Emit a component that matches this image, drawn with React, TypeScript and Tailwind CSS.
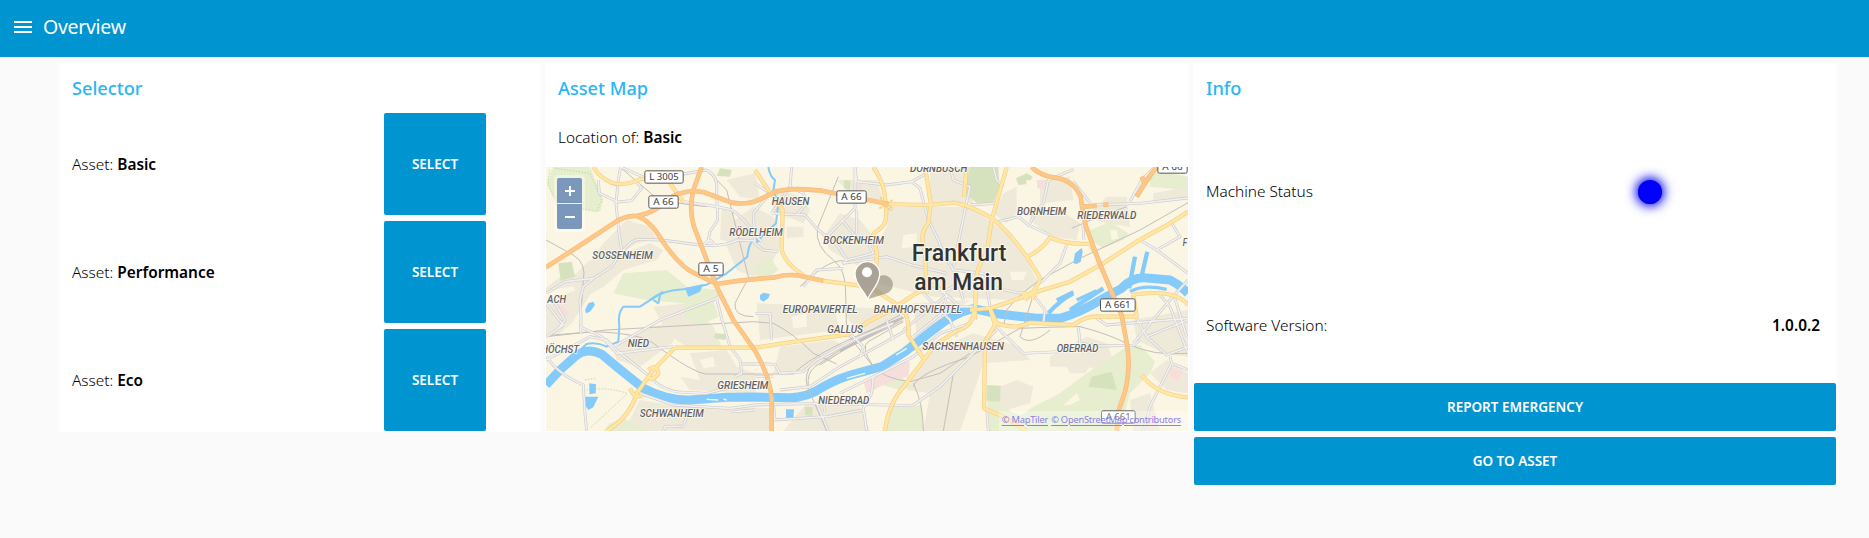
import React from "react";

type Pt = string;

const buildings: Pt[] = [
  "18,400 60,385 130,375 160,350 150,300 110,340 60,350 18,385",
  "18,440 70,405 130,380 150,405 95,490 60,520 18,530",
  "190,250 260,180 330,200 350,240 290,250 260,270 240,320 170,350 140,320",
  "150,340 240,310 250,280 330,250 370,270 350,300 250,330 190,380 120,420 100,380",
  "560,60 645,40 660,118 600,110",
  "570,190 640,140 700,170 730,240 700,300 640,350 590,330 560,260",
  "545,140 580,150 590,250 540,240",
  "220,560 320,500 410,490 400,545 340,590 300,620 230,600",
  "340,440 440,430 520,500 545,560 440,560 380,520",
  "450,580 560,570 590,620 645,640 645,700 450,690 420,650 480,660",
  "300,720 420,740 560,740 690,745 690,813 250,813 280,760",
  "700,80 780,110 810,150 790,190 740,170 700,160",
  "740,200 790,200 790,230 740,235",
  "850,230 900,160 960,180 1000,230 1000,340 920,300 870,270",
  "890,60 1010,60 1030,120 940,110",
  "1040,140 1160,140 1160,240 1110,260 1020,240 1040,200",
  "1170,21 1280,21 1300,130 1170,130",
  "1110,140 1290,140 1400,220 1460,300 1495,370 1420,420 1180,410 1010,370 1010,260",
  "1390,100 1430,80 1430,160 1400,190 1360,160",
  "1480,140 1560,150 1620,190 1610,240 1530,230 1470,180",
  "1500,60 1590,50 1600,120 1500,130",
  "1700,110 1760,110 1770,200 1700,190 1640,170",
  "1840,100 1944,80 1944,110 1840,130",
  "650,430 880,440 900,510 660,540",
  "720,560 880,540 920,560 870,600 760,640 700,640",
  "900,440 1100,450 1060,500 960,530",
  "1120,430 1290,420 1230,460 1130,530",
  "1160,580 1300,520 1440,560 1470,600 1330,610 1300,700 1260,813 1150,813 1170,700 1100,690",
  "1530,590 1600,550 1640,530 1700,550 1720,600 1680,640 1650,620 1635,640 1590,640 1580,620 1530,620",
  "1380,680 1430,660 1480,680 1470,730 1400,750 1340,740",
  "1780,480 1944,450 1944,590 1870,580 1790,540",
  "1830,640 1880,600 1944,640 1944,700 1880,690",
  "1770,720 1830,700 1860,813 1780,813",
  "800,730 960,740 990,813 730,813",
];

const paleGreens: Pt[] = [
  "40,21 150,21 190,120 180,155 130,150 60,160 20,70",
  "250,340 380,330 440,380 540,390 520,430 430,430 320,420 220,400",
  "430,430 520,420 535,470 480,495 430,465",
  "645,320 690,290 715,330 690,350 650,350",
  "1640,215 1710,185 1765,220 1750,240 1690,265 1650,240",
  "1830,30 1944,50 1944,90 1830,80",
  "1480,740 1560,700 1640,640 1760,560 1800,555 1845,605 1830,640 1770,700 1740,813 1500,813 1440,770",
  "1340,700 1420,760 1500,780 1500,813 1350,813",
  "1050,730 1110,740 1145,735 1150,813 1040,813",
  "210,790 250,775 330,813 190,813",
  "1010,670 1080,650 1120,680 1080,690",
];

const deepGreens: Pt[] = [
  "1290,21 1375,21 1378,80 1360,130 1310,128 1272,100",
  "1428,55 1460,40 1478,50 1465,72 1435,75",
  "55,310 95,305 105,350 62,362",
  "525,520 560,522 555,540 522,535",
  "540,25 575,30 570,50 530,48",
  "795,740 818,742 817,768 795,765",
  "1340,675 1382,677 1380,725 1340,722",
  "1655,650 1715,635 1730,690 1645,680",
  "912,60 932,62 930,90 912,85",
];

const pinks: Pt[] = [
  "45,430 75,440 88,460 70,475 45,455",
  "970,665 1080,605 1110,605 1105,650 1050,665 980,700",
  "1490,60 1518,60 1515,88 1492,85",
  "945,65 965,65 965,88 942,88",
  "1890,620 1930,635 1915,665 1890,650",
];

const creams: Pt[] = [
  "1090,225 1130,220 1130,260 1085,265",
  "1240,340 1270,335 1280,360 1245,370",
  "480,600 520,590 525,620 490,625",
  "1410,335 1460,335 1450,360 1415,360",
  "1460,60 1490,65 1490,130 1450,150",
  "755,470 800,460 800,500 760,505",
  "1710,210 1730,210 1735,235 1715,240",
  "1570,735 1610,700 1620,720 1590,735",
];

const motorways: Pt[] = [
  "M18 322L130 250L220 190Q255 166 290 168Q345 160 400 108Q440 88 490 96L575 128Q620 136 660 118L700 98Q745 80 845 92L985 120L1045 132",
  "M290 168Q330 180 365 240Q420 320 460 338L530 372L600 362L660 356L705 352Q755 338 800 352L850 362",
  "M485 21L460 90Q446 150 462 200L485 260L530 380L580 480L645 572Q690 650 695 715L695 813",
  "M1475 21Q1500 46 1540 52Q1600 58 1622 110Q1628 160 1638 200L1675 300L1725 420L1745 465L1762 560Q1772 625 1755 695L1735 755L1730 813",
  "M1790 110L1815 70L1805 50M1815 70L1835 40L1850 21",
  "M1628 140L1670 138M1690 135L1705 133",
];

const yellows: Pt[] = [
  "M160 21Q180 55 215 68Q250 80 300 58L350 50Q390 58 400 85L430 125",
  "M645 30L685 90L728 150L725 270Q735 310 790 345",
  "M1000 21Q1035 70 1037 130Q1045 190 1020 206Q990 225 998 240Q1012 260 1010 300L1005 370",
  "M1035 132L1165 135L1245 128Q1300 140 1350 172Q1400 205 1460 290L1498 350Q1506 370 1455 420",
  "M1155 21L1172 130L1165 190Q1135 225 1155 270L1160 400",
  "M1400 21L1355 180L1340 280Q1310 320 1308 360L1305 480",
  "M1460 290Q1500 275 1530 232Q1570 252 1650 252L1672 290",
  "M1944 155L1890 190L1790 245L1690 310L1590 365L1490 395L1410 425L1350 445L1290 450",
  "M845 362L1000 382",
  "M405 563L645 563L765 545L925 523L985 485L1045 455L1120 405L1190 370",
  "M200 813Q270 770 290 700L340 630L405 563",
  "M1035 813Q1045 730 1095 675L1185 555L1245 515Q1300 500 1302 450",
  "M990 380L1065 430Q1110 450 1105 525L1150 595",
  "M1350 445L1370 490Q1430 510 1470 488L1600 495Q1640 465 1685 470L1790 470L1780 405",
  "M1350 445L1365 495L1335 545L1332 745L1390 770L1460 813",
  "M1805 645Q1850 705 1944 712",
  "M1775 405Q1840 395 1880 402Q1925 410 1944 435",
  "M1280 21L1272 110",
  "M1455 395L1455 420M1475 390L1480 420M1445 400L1490 405",
  "M270 685Q285 720 305 705M325 630Q350 610 355 640Q340 665 318 650",
];

const streets: Pt[] = [
  "M175 60L178 100L235 126L275 122L305 85L290 65",
  "M242 21L235 60L228 130L235 200L245 275",
  "M242 21L330 60L500 30",
  "M500 30Q535 50 530 90L533 180L510 215L503 250M490 256Q510 225 525 258",
  "M430 125Q550 142 575 150Q610 170 645 225L665 245",
  "M245 275L215 320L160 355L75 365L18 400",
  "M245 275Q280 235 300 238L365 240L480 255Q550 262 593 240L645 242",
  "M160 355L130 380L120 420Q125 480 122 520",
  "M18 430L70 495M40 420L75 480L55 505M70 495L20 530",
  "M18 600L95 560L150 530L200 540L235 575L330 650Q370 695 430 697L500 700L560 685",
  "M120 500L185 530L230 580L400 560",
  "M230 555L360 480L530 415L545 400",
  "M530 415L545 475L570 560L600 600L605 640L585 650M605 612L660 612",
  "M20 590Q50 640 130 675L135 760L140 813",
  "M300 700L400 735L570 745L645 735L830 730L1120 737",
  "M575 745L580 755L645 750M370 813L375 800L430 798L440 770",
  "M645 70L690 100L640 160L645 250L670 270L715 275",
  "M755 21L750 80L790 100L800 130L770 165M750 80L695 160",
  "M695 160L795 165L830 205L895 260L920 300L910 310L1040 290L1115 315L1220 340",
  "M920 300L1000 280L985 250",
  "M860 230L945 145L945 21L950 65L1040 75L1115 65L1140 85L1165 180",
  "M950 150L950 220M905 180L960 245M790 380L830 330L910 325",
  "M1115 65L1160 40M1230 21L1240 60L1290 80L1275 150L1240 320",
  "M1165 180L1190 230L1215 290L1240 330L1330 340L1370 385L1445 400",
  "M1290 135L1370 130M1375 185L1435 170L1465 195L1530 225",
  "M1360 21L1370 60L1390 80M1470 190L1490 150L1510 130L1525 60L1600 28",
  "M1580 255L1560 310L1500 370",
  "M1600 65L1640 115L1655 135L1800 130L1944 114",
  "M1770 125L1805 60L1840 25M1800 240L1850 270L1944 340M1850 270L1920 230L1895 190",
  "M1628 190L1632 240M1944 360L1890 420L1780 550",
  "M1790 475L1820 530L1880 585L1944 560M1860 405L1890 440L1944 580",
  "M1820 530L1944 480M1900 400L1940 530M1670 475L1700 495L1944 475",
  "M1890 590L1895 610L1830 740L1810 813M1895 610L1944 630",
  "M645 610L705 613L720 640L790 635L830 600L960 530L1060 490",
  "M645 460L690 460L695 540M645 650L700 650M720 690L810 680L900 620L1030 550L1110 505",
  "M920 510L970 560L960 590M1000 650L995 700L970 745L980 813M970 750L860 770L700 780",
  "M900 700L1000 650L1120 590L1200 520L1290 490",
  "M1090 510L1140 470L1220 405M1120 530L1230 440M1150 400L1230 480L1250 530",
  "M1180 370L1260 440L1300 440M1200 400L1280 360L1340 380L1350 440",
  "M1190 350L1220 410L1200 470M1040 480L1060 540M1250 350L1270 420",
  "M1370 500L1450 580L1560 575M1615 503L1620 550L1680 558L1780 556L1800 540",
  "M1120 735L1200 680L1290 590L1370 510M1480 405L1515 450L1510 490",
  "M1340 745L1345 813M850 730L855 755M700 730L705 780M830 730L865 813",
];

const rails: Pt[] = [
  "M18 240L100 285Q140 310 130 360L120 500",
  "M18 530L200 510L640 485L700 490Q760 520 820 580L890 612",
  "M18 527L160 515Q300 520 340 550Q460 640 500 642L760 642Q830 570 1080 475",
  "M240 21L350 115Q400 130 500 140",
  "M500 30L560 90L600 250L625 350L645 360",
  "M895 50L832 205Q825 260 880 300Q920 330 917 405L920 520L1000 620Q1030 655 1110 665L1200 640L1290 580",
  "M625 355Q600 400 585 430Q580 470 640 470",
  "M1080 465L900 560L820 610Q790 640 802 680L860 813",
  "M1085 475L900 570L825 620Q800 640 805 680M1088 482L920 565L840 615",
  "M1000 620Q960 560 985 545L1090 485",
  "M1120 680Q1130 640 1290 590L1440 505Q1560 500 1620 500Q1700 520 1760 550Q1840 590 1944 580",
  "M1120 670Q1150 730 1150 813M1240 640Q1230 700 1210 813",
  "M1944 128L1800 210L1620 295L1500 360Q1440 400 1400 450L1390 500",
  "M1480 405L1440 530Q1470 560 1530 510M1595 205L1640 185L1760 140",
  "M780 380Q860 300 910 302",
];

const streams: Pt[] = [
  "M330 420Q370 390 430 388L500 374L560 340L622 290Q628 240 645 240Q670 230 655 245",
  "M685 21Q690 50 705 60L700 90L715 130L708 190L660 235L645 252",
  "M360 405L355 430L340 420M370 395L300 440L250 440Q232 460 238 500L235 545L200 560Q170 545 140 552L110 580",
];

const river =
  "M18 675L60 630L105 590Q140 560 185 583L230 620L310 685Q380 722 450 720L560 712L645 711L745 713Q800 714 850 680Q900 652 950 640L1025 620L1095 575L1185 505Q1245 458 1300 446L1370 461L1490 475L1560 475Q1620 458 1690 415L1745 385Q1780 346 1830 355L1890 360Q1920 375 1944 400";

const ponds: Pt[] = [
  "135,450 145,430 160,425 165,435 150,455 138,460",
  "148,670 168,673 167,700 148,703",
  "133,710 175,710 160,742 145,750 135,735",
  "738,748 762,748 760,775 738,775",
  "660,405 670,398 690,402 685,415 670,425 660,418",
  "1600,310 1605,280 1625,264 1628,275 1622,305 1610,312",
  "435,385 490,372 480,395 445,410",
];

const labels: [string, number, number, number][] = [
  ["SOSSENHEIM", 157, 297, 181],
  ["RÖDELHEIM", 568, 230, 160],
  ["HAUSEN", 695, 135, 113],
  ["BOCKENHEIM", 850, 253, 182],
  ["DORNBUSCH", 1110, 38, 172],
  ["BORNHEIM", 1431, 167, 148],
  ["RIEDERWALD", 1612, 179, 177],
  ["F", 1928, 258, 13],
  ["ACH", 22, 430, 56],
  ["HÖCHST", 4, 579, 113],
  ["NIED", 263, 562, 64],
  ["GRIESHEIM", 532, 689, 153],
  ["SCHWANHEIM", 299, 773, 192],
  ["EUROPAVIERTEL", 728, 459, 225],
  ["BAHNHOFSVIERTEL", 1001, 459, 264],
  ["GALLUS", 862, 520, 107],
  ["SACHSENHAUSEN", 1147, 570, 245],
  ["NIEDERRAD", 835, 732, 153],
  ["OBERRAD", 1550, 576, 125],
];

const shields: [string, number, number, number][] = [
  ["L 3005", 313, 31, 118],
  ["A 66", 325, 106, 91],
  ["A 5", 475, 307, 76],
  ["A 66", 889, 91, 91],
  ["A 66", 1852, 1, 91],
  ["A 661", 1680, 415, 107],
  ["A 661", 1683, 751, 104],
];

function Lines({ d, color, width }: { d: Pt[]; color: string; width: number }) {
  return (
    <g fill="none" stroke={color} strokeWidth={width} strokeLinejoin="round">
      {d.map((p) => (
        <path key={p} d={p} />
      ))}
    </g>
  );
}

function Areas({ points, color }: { points: Pt[]; color: string }) {
  return (
    <g fill={color}>
      {points.map((p) => (
        <polygon key={p} points={p} />
      ))}
    </g>
  );
}

function CityMap() {
  return (
    <svg className="block h-full w-full" viewBox="18 21 1926 792" preserveAspectRatio="none">
      <rect x="18" y="21" width="1926" height="792" fill="#fbf5e4" />
      <Areas points={buildings} color="#efe9d9" />
      <Areas points={paleGreens} color="#e6eecf" />
      <Areas points={deepGreens} color="#d6e2bd" />
      <Areas points={pinks} color="#f6dfdb" />
      <Areas points={creams} color="#fbf5e4" />
      <g fill="none" stroke="#bdd8a0" strokeWidth="3" strokeDasharray="4 5">
        <path d="M30 30Q15 80 45 110L75 150M45 25L150 40L185 120L170 155L120 145" />
        <path d="M140 690Q200 680 262 700L150 805M135 660L165 655" />
      </g>

      <Lines d={streams} color="#84cbfb" width={6} />
      <Lines d={[river]} color="#84cbfb" width={27} />
      <g fill="none" stroke="#84cbfb" strokeWidth="13">
        <path d="M1525 460Q1560 420 1600 400M1590 450L1690 385M1767 385L1785 290M1804 352L1822 275" />
        <path d="M1550 420L1600 395M1610 420L1670 392M1770 395Q1810 372 1880 388" strokeWidth="10" />
      </g>
      <Areas points={ponds} color="#84cbfb" />
      <g fill="none" stroke="#fbf5e4" strokeWidth="4">
        <path d="M920 655L975 640M1068 585L1100 565M500 718L535 720M550 717L560 720" />
      </g>

      <Lines d={rails} color="#c3bfba" width={3} />
      <path d="M1090 472L1000 520L900 573" fill="none" stroke="#c3bfba" strokeWidth="8" />
      <Lines d={streets} color="#cccbcb" width={8.5} />
      <Lines d={streets} color="#f2f1ef" width={4.8} />
      <Lines d={yellows} color="#f2cb8b" width={12.5} />
      <Lines d={yellows} color="#ffe7a1" width={9} />
      <Lines d={motorways} color="#f5b97d" width={14} />
      <Lines d={motorways} color="#fec785" width={10.5} />
      <path
        d="M1015 120L1060 145M1018 145L1058 120M1022 112Q1038 150 1056 150"
        fill="none"
        stroke="#f9cd83"
        strokeWidth="6"
        strokeDasharray="7 3"
      />

      <g
        fill="#616164"
        stroke="#fdfaf2"
        strokeWidth="5"
        strokeLinejoin="round"
        paintOrder="stroke"
        fontFamily="Roboto, sans-serif"
        fontStyle="italic"
        fontWeight="500"
        fontSize="33"
      >
        {labels.map(([t, x, y, w]) => (
          <text key={t} x={x} y={y - 1} textLength={w} lengthAdjust="spacingAndGlyphs">
            {t}
          </text>
        ))}
      </g>

      <g fontFamily="'Noto Sans', sans-serif" fontSize="29" fill="#3c3c3c">
        {shields.map(([t, x, y, w]) => (
          <g key={`${t}-${x}`}>
            <rect x={x + 1.5} y={y + 1.5} width={w - 3} height="37" rx="5" fill="#fff" stroke="#555" strokeWidth="3" />
            <text x={x + 15} y={y + 30} textLength={w - 30} lengthAdjust="spacingAndGlyphs">
              {t}
            </text>
          </g>
        ))}
      </g>

      <g
        fill="#333"
        stroke="#faf6ea"
        strokeWidth="7"
        strokeLinejoin="round"
        paintOrder="stroke"
        fontFamily="Roboto, sans-serif"
        fontWeight="500"
        fontSize="69"
      >
        <text x="1115" y="304" textLength="284" lengthAdjust="spacingAndGlyphs">
          Frankfurt
        </text>
        <text x="1123" y="390" textLength="266" lengthAdjust="spacingAndGlyphs">
          am Main
        </text>
      </g>

      <path d="M983 418L1008 357A28 28 0 1 1 1036 401Z" fill="#8d8777" fillOpacity="0.6" />
      <path
        d="M983 419C976 395 945 375 945 342A37 37 0 0 1 1019 342C1019 375 990 395 983 419Z"
        fill="#aaa294"
        stroke="#fff"
        strokeWidth="4"
      />
      <circle cx="981" cy="337" r="15" fill="#fff" />
    </svg>
  );
}

function Title({ children }: { children: React.ReactNode }) {
  return <h2 className="text-[18.2px] leading-6 font-[550] text-[#29b6f6]">{children}</h2>;
}

function ActionButton({ children, className }: { children: React.ReactNode; className: string }) {
  return (
    <button
      className={`flex items-center justify-center rounded-[2px] bg-[#0094d0] pb-px text-[13.5px] leading-5 font-semibold text-white ${className}`}
    >
      {children}
    </button>
  );
}

const assets = ["Basic", "Performance", "Eco"];

export default function App() {
  return (
    <div className="h-[538px] w-full overflow-hidden bg-[#fafafa] font-['Noto_Sans',sans-serif] text-black">
      <header className="flex h-[57px] items-start bg-[#0094d0] pt-[14px] pl-[14px] text-white">
        <div className="mt-[7px] flex w-[18px] flex-col gap-[3px]">
          <span className="h-[2px] bg-white" />
          <span className="h-[2px] bg-white" />
          <span className="h-[2px] bg-white" />
        </div>
        <h1 className="ml-[11px] text-[19.5px] leading-[26px] font-normal tracking-[-0.3px]">Overview</h1>
      </header>

      <main className="flex items-start gap-1 pt-[6px] pl-[59px]">
        <section className="h-[369px] w-[482px] bg-white">
          <div className="flex h-[50px] items-center pb-px pl-[13px]">
            <Title>Selector</Title>
          </div>
          <div className="flex flex-col gap-[6px]">
            {assets.map((name) => (
              <div key={name} className="flex h-[102px] items-center pl-[13px]">
                <p className="w-[312px] pt-[1px] text-[15.4px] font-light">
                  Asset: <b className="font-semibold">{name}</b>
                </p>
                <ActionButton className="h-[102px] w-[102px]">SELECT</ActionButton>
              </div>
            ))}
          </div>
        </section>

        <section className="h-[369px] w-[644px] bg-white px-px">
          <div className="flex h-[50px] items-center pb-px pl-3">
            <Title>Asset Map</Title>
          </div>
          <p className="flex h-[54px] items-center gap-1 pb-[4px] pl-3 text-[15.4px] font-light">
            Location of: <b className="font-semibold">Basic</b>
          </p>
          <div className="relative h-[264px] overflow-hidden">
            <CityMap />
            <div className="absolute top-2 left-2 flex flex-col gap-px rounded-[4px] bg-white/40 p-[3px]">
              <button className="flex h-[25px] w-[25px] items-center justify-center rounded-t-[2px] bg-[#7b98bc]">
                <svg width="10" height="10" viewBox="0 0 10 10" stroke="#fff" strokeWidth="2">
                  <path d="M5 0V10M0 5H10" />
                </svg>
              </button>
              <button className="flex h-[25px] w-[25px] items-center justify-center rounded-b-[2px] bg-[#7b98bc]">
                <svg width="10" height="10" viewBox="0 0 10 10" stroke="#fff" strokeWidth="2">
                  <path d="M0 5H10" />
                </svg>
              </button>
            </div>
            <div className="absolute right-0 bottom-0 flex h-5 items-center gap-[3px] bg-white/30 pr-[7px] pb-[3px] pl-[3px] text-[9.3px] tracking-[-0.22px] whitespace-nowrap text-[#8a80e6]">
              <a className="underline underline-offset-2">© MapTiler</a>
              <a className="underline underline-offset-2">© OpenStreetMap contributors</a>
            </div>
          </div>
        </section>

        <section className="h-[423px] w-[644px] bg-white px-px">
          <div className="flex h-[50px] items-center pb-px pl-3">
            <Title>Info</Title>
          </div>
          <div className="flex h-[158px] items-center pb-px pl-3 text-[15.4px] font-light">
            <span className="w-[432px]">Machine Status</span>
            <span className="h-6 w-6 rounded-full bg-[#0000ff] shadow-[0_-1px_7px_1px_rgba(0,0,0,0.12),inset_0_-1px_2px_#0000c8,0_0_12px_2px_#0000ff]" />
          </div>
          <div className="flex h-[112px] items-center justify-between pr-4 pb-[2px] pl-3 text-[15.4px] font-light">
            <span>Software Version:</span>
            <b className="font-semibold">1.0.0.2</b>
          </div>
          <div className="flex flex-col gap-[6px]">
            <ActionButton className="h-12 w-full">REPORT EMERGENCY</ActionButton>
            <ActionButton className="h-12 w-full">GO TO ASSET</ActionButton>
          </div>
        </section>
      </main>
    </div>
  );
}
